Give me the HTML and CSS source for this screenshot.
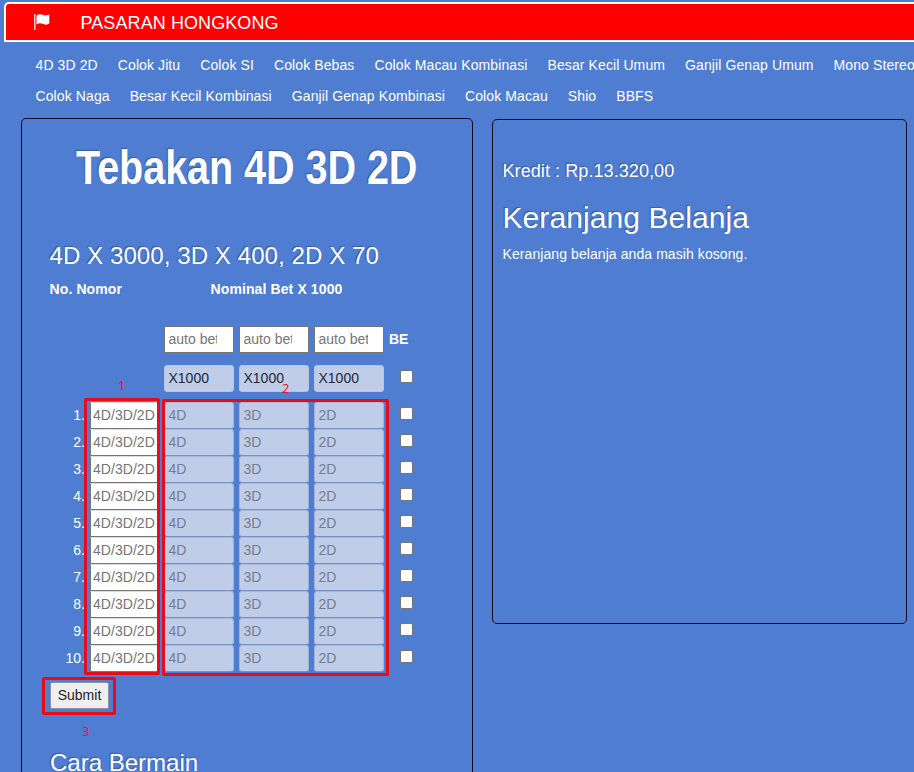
FILE: index.html
```html
<!DOCTYPE html>
<html lang="id">
<head>
<meta charset="utf-8">
<title>Pasaran Hongkong</title>
<link rel="stylesheet" href="styles.css">
</head>
<body>
<header class="topbar">
<svg class="flag" width="16" height="18" viewBox="0 0 16 18"><path d="M0.8 1V17" stroke="#fff" stroke-width="1.2"/><path d="M2.5 2.5C5 .6 7.5 1 9.5 2.1C11.5 3 13.5 2 15.3 1.3V10.5C12.5 12.2 10.5 11.8 8.5 10.8C6.5 9.8 4.5 10.2 2.5 11.5Z" fill="#fff"/></svg>
<span>PASARAN HONGKONG</span>
</header>
<nav class="menu">
<div class="menu-row"><a>4D 3D 2D</a><a>Colok Jitu</a><a>Colok SI</a><a>Colok Bebas</a><a>Colok Macau Kombinasi</a><a>Besar Kecil Umum</a><a>Ganjil Genap Umum</a><a>Mono Stereo</a></div>
<div class="menu-row"><a>Colok Naga</a><a>Besar Kecil Kombinasi</a><a>Ganjil Genap Kombinasi</a><a>Colok Macau</a><a>Shio</a><a>BBFS</a></div>
</nav>
<main class="panels">
<section class="panel game">
<h1>Tebakan 4D 3D 2D</h1>
<h2 class="odds">4D X 3000, 3D X 400, 2D X 70</h2>
<div class="heads"><b>No. Nomor</b><b>Nominal Bet X 1000</b></div>
<div class="row auto"><i></i><i></i><div class="field clip"><span>auto bet</span></div><div class="field clip"><span>auto bet</span></div><div class="field clip last"><span>auto bet</span></div><b>BE</b></div>
<div class="row multi"><i></i><i></i><div class="field off">X1000</div><div class="field off">X1000</div><div class="field off">X1000</div><input type="checkbox"></div>
<div class="bets">
<div class="row"><span class="no">1.</span><div class="field">4D/3D/2D</div><div class="field off">4D</div><div class="field off">3D</div><div class="field off">2D</div><input type="checkbox"></div>
<div class="row"><span class="no">2.</span><div class="field">4D/3D/2D</div><div class="field off">4D</div><div class="field off">3D</div><div class="field off">2D</div><input type="checkbox"></div>
<div class="row"><span class="no">3.</span><div class="field">4D/3D/2D</div><div class="field off">4D</div><div class="field off">3D</div><div class="field off">2D</div><input type="checkbox"></div>
<div class="row"><span class="no">4.</span><div class="field">4D/3D/2D</div><div class="field off">4D</div><div class="field off">3D</div><div class="field off">2D</div><input type="checkbox"></div>
<div class="row"><span class="no">5.</span><div class="field">4D/3D/2D</div><div class="field off">4D</div><div class="field off">3D</div><div class="field off">2D</div><input type="checkbox"></div>
<div class="row"><span class="no">6.</span><div class="field">4D/3D/2D</div><div class="field off">4D</div><div class="field off">3D</div><div class="field off">2D</div><input type="checkbox"></div>
<div class="row"><span class="no">7.</span><div class="field">4D/3D/2D</div><div class="field off">4D</div><div class="field off">3D</div><div class="field off">2D</div><input type="checkbox"></div>
<div class="row"><span class="no">8.</span><div class="field">4D/3D/2D</div><div class="field off">4D</div><div class="field off">3D</div><div class="field off">2D</div><input type="checkbox"></div>
<div class="row"><span class="no">9.</span><div class="field">4D/3D/2D</div><div class="field off">4D</div><div class="field off">3D</div><div class="field off">2D</div><input type="checkbox"></div>
<div class="row"><span class="no">10.</span><div class="field">4D/3D/2D</div><div class="field off">4D</div><div class="field off">3D</div><div class="field off">2D</div><input type="checkbox"></div>
<span class="mark mark-numbers"></span>
<span class="mark mark-bets"></span>
<span class="tag tag-1">1</span>
<span class="tag tag-2">2</span>
</div>
<div class="submit-wrap"><button class="submit">Submit</button><span class="mark mark-submit"></span><span class="tag tag-3">3</span></div>
<h2 class="howto">Cara Bermain</h2>
</section>
<aside class="panel cart">
<h4>Kredit : Rp.13.320,00</h4>
<h2>Keranjang Belanja</h2>
<p>Keranjang belanja anda masih kosong.</p>
</aside>
</main>
</body>
</html>
```
FILE: styles.css
```css
* { box-sizing: border-box; }
html { overflow: hidden; }
body {
  margin: 0;
  height: 772px;
  overflow: hidden;
  background: #4f7dd1;
  color: #fff;
  font: 14px/20px "Liberation Sans", Arial, sans-serif;
}
h1, h2, h4, p { margin: 0; font-weight: 400; }
.topbar {
  display: flex;
  align-items: center;
  width: 930px;
  height: 40px;
  margin: 2px 0 0 4px;
  padding-left: 28px;
  border: 2px solid #fff;
  border-radius: 5px 0 0 0;
  background: #f00;
  font-size: 18px;
  letter-spacing: .09px;
}
.topbar span { position: relative; top: 1px; }
.flag { margin-right: 30.5px; }
.menu { padding: 13px 0 0 35.5px; }
.menu-row { display: flex; gap: 20px; height: 31px; white-space: nowrap; letter-spacing: .1px; }
.menu-row a { flex: none; }
.panels { display: flex; align-items: flex-start; gap: 19px; padding: 1px 0 0 21px; }
.panel { flex: none; border: 1px solid #05091c; border-radius: 5px; }
.game { width: 452px; height: 680px; padding-left: 28px; }
h1 {
  width: max-content;
  margin: 20px 0 0 26px;
  font-size: 48px;
  line-height: 58px;
  font-weight: 700;
  transform: scaleX(.822);
  transform-origin: left;
  white-space: nowrap;
}
h1, h2, h4 { text-shadow: -1px -1px 1px rgba(20, 50, 110, .45); }
.odds { margin: 44px 0 0 -.5px; font-size: 24px; line-height: 30px; letter-spacing: .09px; }
.heads { display: grid; grid-template-columns: 161px auto; margin: 8px 0 0 -.5px; letter-spacing: .11px; }
.row {
  display: grid;
  grid-template-columns: 35px 69px 70px 70px 70px 30px;
  column-gap: 5px;
  align-items: center;
  height: 27px;
}
.auto { margin-top: 27px; }
.auto b { margin-top: -2px; }
.multi { margin-top: 12px; }
.bets { position: relative; margin-top: 10px; }
.no { margin-top: -1px; text-align: right; }
.field {
  height: 27px;
  padding: 1px 4px;
  border: 1px solid #767676;
  background: #fff;
  color: #757575;
  line-height: 22px;
  white-space: nowrap;
  overflow: hidden;
}
.field:nth-child(2) { width: 68px; padding-left: 2px; border-top-color: #ddd; letter-spacing: .05px; }
.field.off {
  border-color: #7891c0;
  border-top-color: #a9b9dd;
  border-left-color: #a0b2db;
  border-right-color: #a0b2db;
  border-radius: 3px;
  background: #c0cde9;
  color: #747d8f;
  padding-left: 3.5px;
}
.multi .field.off { border-color: #b7c6e5; color: #20283a; }
.clip { padding: 1px 3.5px; }
.clip span { display: block; width: 48.5px; overflow: hidden; }
.clip.last span { width: 49.5px; }
input { appearance: none; width: 13px; height: 13px; margin: -5px 0 0 11px; border: 1px solid #767676; border-radius: 2px; background: #fff; }
.mark { position: absolute; border: 3px solid #e60c18; border-radius: 2px; pointer-events: none; }
.mark-numbers { left: 34px; top: -4px; width: 76px; height: 277px; }
.mark-bets { left: 112px; top: -3px; width: 227px; height: 277px; }
.tag { position: absolute; color: #f0142c; font: 13px/16px "Noto Sans", sans-serif; }
.tag-1 { left: 68px; top: -25px; }
.tag-2 { left: 232px; top: -22px; }
.submit-wrap { position: relative; margin-top: 10px; height: 27px; }
.submit {
  display: block;
  width: 59px;
  height: 27px;
  padding: 0 0 2px;
  border: 1px solid #8b95a8;
  border-radius: 2px;
  background: #efefef;
  color: #222;
  font: 14px/20px "Liberation Sans", Arial, sans-serif;
}
.mark-submit { left: -8px; top: -5px; width: 74px; height: 38px; }
.tag-3 { left: 32px; top: 41px; }
.howto { margin-top: 39px; font-size: 24px; line-height: 30px; }
.cart { width: 415px; height: 505px; margin-top: 1px; padding: 41px 0 0 9.5px; letter-spacing: .08px; }
.cart h4 { font-size: 18px; line-height: 20px; }
.cart h2 { margin-top: 17px; font-size: 30px; line-height: 40px; }
.cart p { margin-top: 6px; }
```
